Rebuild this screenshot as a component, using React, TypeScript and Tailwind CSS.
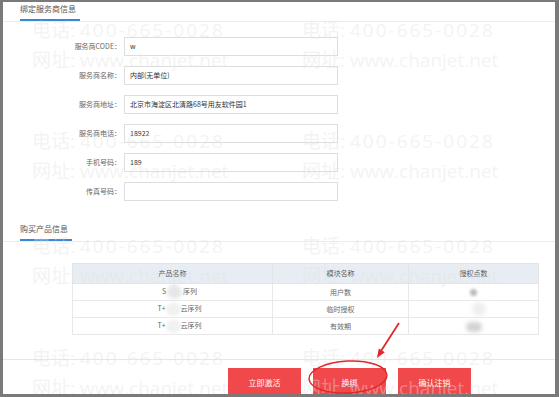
const FONT = { fontFamily: '"Noto Sans CJK SC", "Microsoft YaHei", sans-serif' }

const FIELDS = [
  { label: '服务商CODE：', value: 'w' },
  { label: '服务商名称：', value: '内部(无单位)' },
  { label: '服务商地址：', value: '北京市海淀区北清路68号用友软件园1' },
  { label: '服务商电话：', value: '18922' },
  { label: '手机号码：', value: '189' },
  { label: '传真号码：', value: '' },
]

// 水印坐标（相对内容区）
const MARKS = [
  { x: 29, y: 13 },
  { x: 299, y: 13 },
  { x: 29, y: 124 },
  { x: 299, y: 124 },
  { x: 29, y: 229 },
  { x: 299, y: 229 },
  { x: 29, y: 341 },
  { x: 299, y: 341 },
]

function Blob({ className }: { className: string }) {
  return <span className={`inline-block rounded-full align-middle ${className}`} />
}

function SectionTitle({ title, width }: { title: string; width: string }) {
  return (
    <div className="flex h-[20px] border-b border-[#ececec]">
      <span className={`ml-[17px] h-[19px] border-b-2 border-[#3a87d8] text-[8px] leading-[14px] text-[#555] ${width}`}>
        {title}
      </span>
    </div>
  )
}

export default function App() {
  return (
    <div
      className="relative h-[397px] w-[559px] overflow-hidden border-t-2 border-r-4 border-b-[3px] border-l-[3px] border-[#7a7a7a] bg-white"
      style={FONT}
    >
      <SectionTitle title="绑定服务商信息" width="w-[60px]" />

      {/* 表单 */}
      <div className="mt-[15px] flex flex-col gap-[10px]">
        {FIELDS.map((f) => (
          <div key={f.label} className="flex h-[19px] items-center">
            <span className="w-[118px] text-right text-[7px] text-[#666]">{f.label}</span>
            <div className="ml-[3px] flex h-[19px] w-[214px] items-center border border-[#dedede] pl-[5px] text-[7px] text-[#333]">
              {f.value}
            </div>
          </div>
        ))}
      </div>

      <div className="mt-[21px]">
        <SectionTitle title="购买产品信息" width="w-[52px]" />
      </div>

      {/* 产品表格 */}
      <table className="mt-[21px] ml-[69px] w-[466px] table-fixed border-collapse text-[7px]">
        <colgroup>
          <col className="w-[200px]" />
          <col className="w-[136px]" />
          <col className="w-[130px]" />
        </colgroup>
        <thead>
          <tr className="h-[20px] bg-[#e8edf3] text-[#555]">
            <th className="border border-[#e4e4e4] font-normal">产品名称</th>
            <th className="border border-[#e4e4e4] font-normal">模块名称</th>
            <th className="border border-[#e4e4e4] font-normal">授权点数</th>
          </tr>
        </thead>
        <tbody className="text-[#666]">
          <tr className="h-[17px]">
            <td className="border border-[#e8e8e8] pl-[14px] text-center">
              S<Blob className="mx-[1px] h-[14px] w-[15px] bg-[#e6e6e6] blur-[2px]" />序列
            </td>
            <td className="border border-[#e8e8e8] text-center">用户数</td>
            <td className="border border-[#e8e8e8] text-center">
              <Blob className="h-[7px] w-[7px] bg-[#b9b9b9] blur-[1.5px]" />
            </td>
          </tr>
          <tr className="h-[17px]">
            <td className="border border-[#e8e8e8] pl-[14px] text-center">
              T+<Blob className="h-[13px] w-[15px] bg-[#f1f1f1] blur-[1.5px]" />云序列
            </td>
            <td className="border border-[#e8e8e8] text-center">临时授权</td>
            <td className="border border-[#e8e8e8] pl-[10px] text-center">
              <Blob className="h-[14px] w-[14px] bg-[#efefef] blur-[2px]" />
            </td>
          </tr>
          <tr className="h-[17px]">
            <td className="border border-[#e8e8e8] pl-[14px] text-center">
              T+<Blob className="h-[13px] w-[15px] bg-[#f1f1f1] blur-[1.5px]" />云序列
            </td>
            <td className="border border-[#e8e8e8] text-center">有效期</td>
            <td className="border border-[#e8e8e8] text-center">
              <Blob className="h-[10px] w-[16px] bg-[#d2d2d2] blur-[2px]" />
            </td>
          </tr>
        </tbody>
      </table>

      {/* 底部按钮 */}
      <div className="mt-[24px] border-t border-[#e6e6e6]" />
      <div className="mt-[8px] flex gap-[12px] pl-[225px]">
        {['立即激活', '换绑', '确认注销'].map((t) => (
          <button
            key={t}
            className="flex h-[30px] w-[73px] items-center justify-center bg-[#f0484b] text-[8px] text-white"
          >
            {t}
          </button>
        ))}
      </div>

      {/* 水印 */}
      <div className="pointer-events-none absolute inset-0">
        {MARKS.map((m, i) => (
          <div
            key={i}
            className="absolute text-[19px] leading-[30px] whitespace-nowrap text-[rgba(225,225,225,0.4)]"
            style={{ left: m.x, top: m.y, fontFamily: '"Open Sans", "Noto Sans CJK SC", sans-serif' }}
          >
            <div>
              电话: <span className="tracking-[2px]">400-665-0028</span>
            </div>
            <div>网址: www.chanjet.net</div>
          </div>
        ))}
      </div>

      {/* 标注 */}
      <svg className="pointer-events-none absolute top-[-2px] left-[-3px]" width="559" height="397">
        <ellipse
          cx="348"
          cy="377"
          rx="39"
          ry="16"
          transform="rotate(-3 348 377)"
          fill="none"
          stroke="#e3262c"
          strokeWidth="1.5"
        />
        <line x1="399" y1="323" x2="381" y2="351" stroke="#e3262c" strokeWidth="1.8" />
        <polygon points="377,358 384.8,352.3 378.8,348.5" fill="#e3262c" />
      </svg>
    </div>
  )
}
